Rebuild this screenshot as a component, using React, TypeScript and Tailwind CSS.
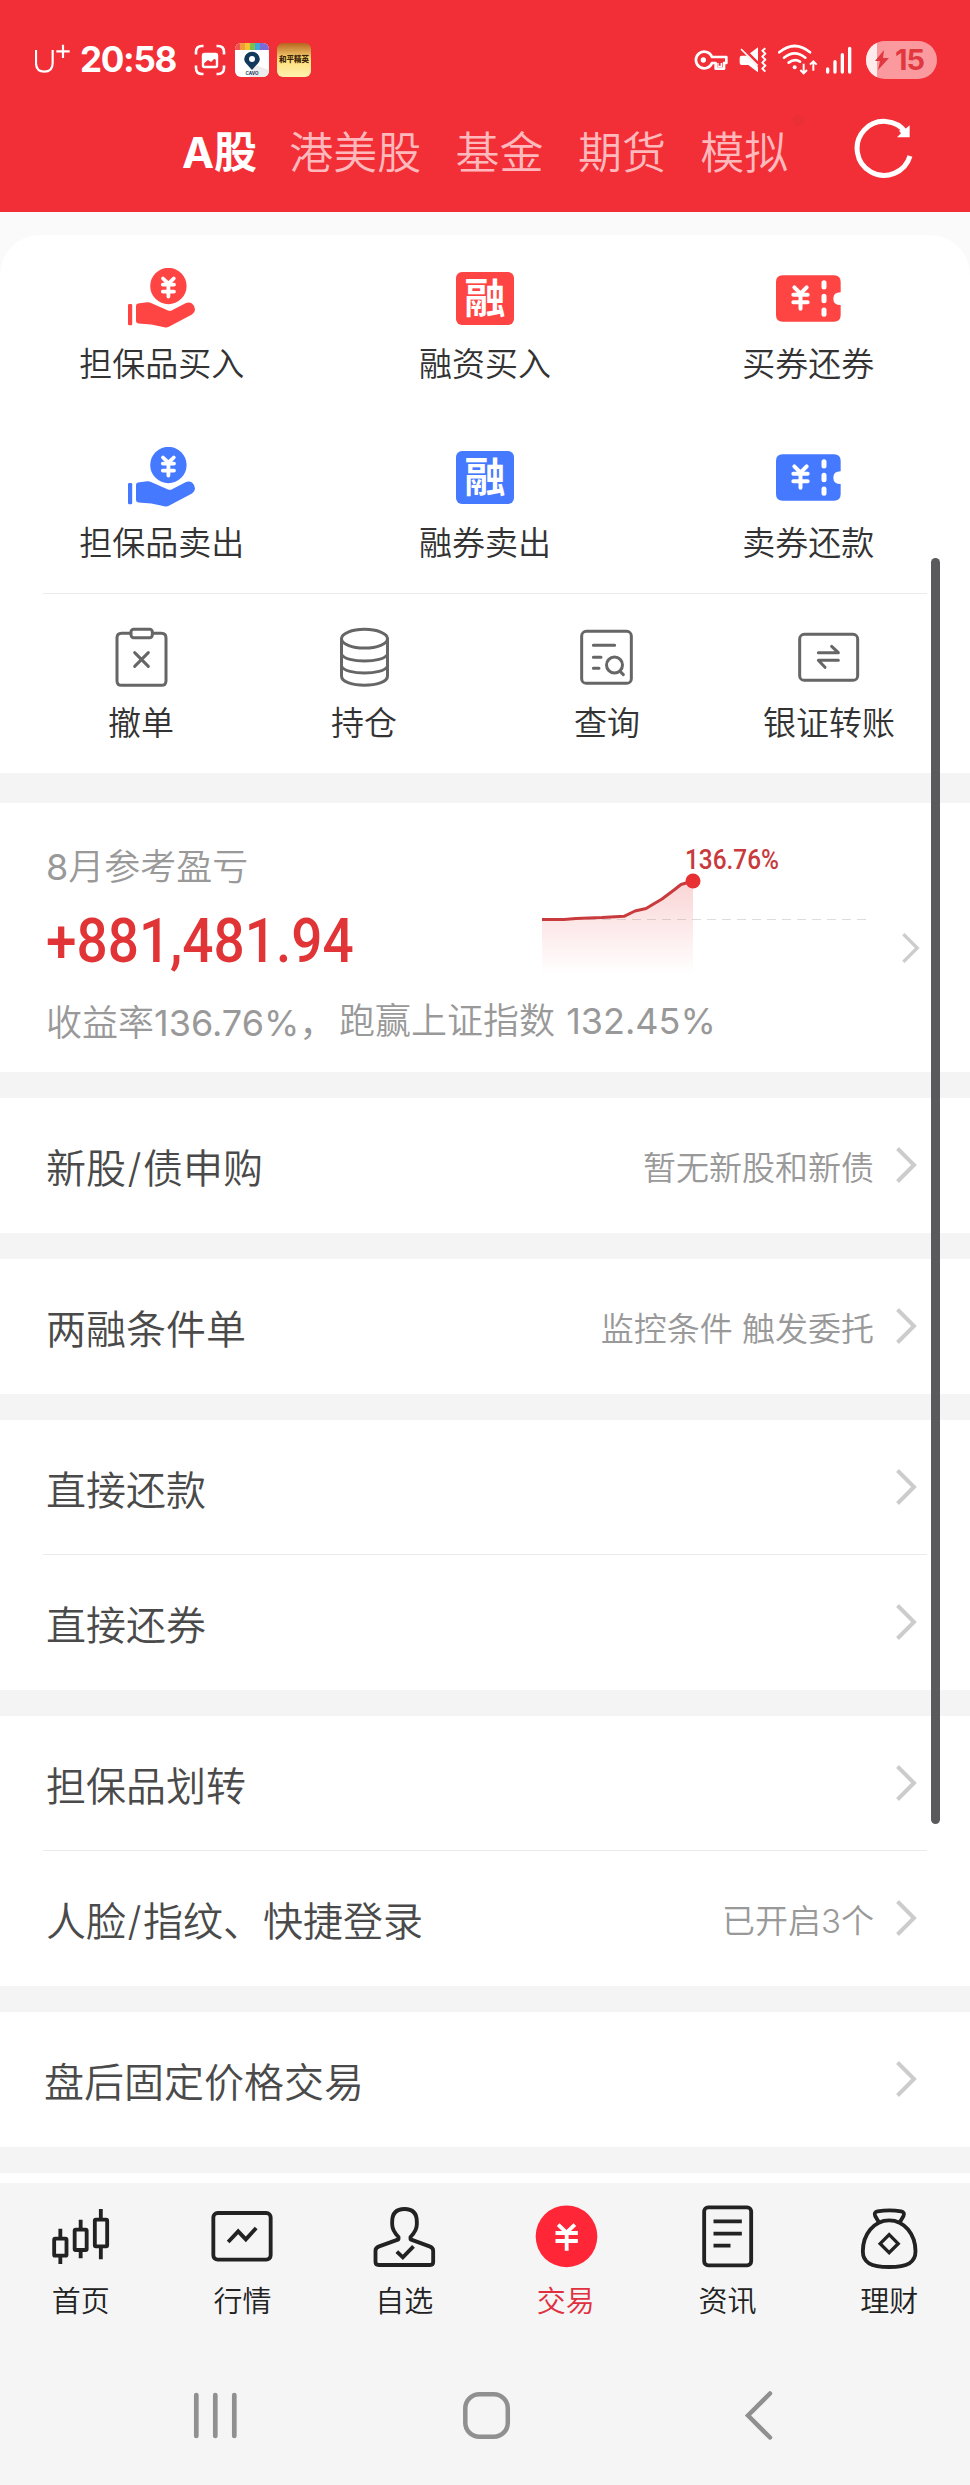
import type { ReactNode } from "react";

const RED = "#ff4444";
const BLUE = "#4579ff";

const marketTabs = ["港美股", "基金", "期货", "模拟"];

interface Row {
  label: string;
  note?: string;
}

const groups: Row[][] = [
  [{ label: "新股/债申购", note: "暂无新股和新债" }],
  [{ label: "两融条件单", note: "监控条件 触发委托" }],
  [{ label: "直接还款" }, { label: "直接还券" }],
  [{ label: "担保品划转" }, { label: "人脸/指纹、快捷登录", note: "已开启3个" }],
];

function HandCoin({ color }: { color: string }) {
  return (
    <svg width="72" height="60" viewBox="126 28 72 60">
      <circle cx="168.4" cy="46" r="18.2" fill={color} />
      <path
        d="M163 38.5l5.4 5.2 5.4-5.2M168.4 44v12.5M162.8 44.6h11.2M162.8 51.6h11.2"
        fill="none"
        stroke="#fff"
        strokeWidth="3.8"
        strokeLinecap="round"
        strokeLinejoin="round"
      />
      <rect x="128" y="64" width="4.2" height="21.3" rx="1.2" fill={color} />
      <path
        d="M136 66q0-2 2-2.400l9-1.300q2-.3 4 .7l17 7.400q2.300.9 4.500-.5l13-6.700q3.500-1.600 6.500.3 3 2.500 3 6 0 3-3 5l-22.700 12q-2.500 1.400-5 .8l-13-2.900-12.800-.9q-2.500-.2-2.500-2.500z"
        fill={color}
      />
    </svg>
  );
}

function RongBadge({ red }: { red?: boolean }) {
  return (
    <div className="flex h-[60px] items-center">
      <div
        className={`flex h-[53px] w-[58px] items-center justify-center rounded-[6px] text-[41px] font-bold leading-none text-white ${
          red ? "bg-[#ff4444]" : "bg-[#4579ff]"
        }`}
      >
        <span>融</span>
      </div>
    </div>
  );
}

function Ticket({ color }: { color: string }) {
  return (
    <svg width="72" height="60" viewBox="637 84 216 180">
      <path
        d="M669 106h154q20 0 20 20v31q-22 0-22 19t22 19v30q0 20-20 20H669q-20 0-20-20v-99q0-20 20-20z"
        fill={color}
      />
      <g fill="none" stroke="#fff" strokeLinecap="round" strokeLinejoin="round">
        <path d="M704 142l18.500 19 18.500-19M722.500 163v43M701 164h43M701 187h43" strokeWidth="12" />
        <path d="M793 128v13M793 169v13M793 210v13" strokeWidth="15" />
      </g>
    </svg>
  );
}

function LineIcon({ viewBox, children }: { viewBox: string; children: ReactNode }) {
  return (
    <svg
      width="64"
      height="64"
      viewBox={viewBox}
      fill="none"
      stroke="#666"
      strokeWidth="9"
      strokeLinecap="round"
      strokeLinejoin="round"
    >
      {children}
    </svg>
  );
}

function TabIcon({ viewBox, children }: { viewBox: string; children: ReactNode }) {
  return (
    <svg width="64" height="64" viewBox={viewBox} fill="none" stroke="#222" strokeWidth="11.500" overflow="visible">
      {children}
    </svg>
  );
}

function Chevron({ small }: { small?: boolean }) {
  return (
    <svg
      width={small ? 19 : 22}
      height={small ? 32 : 38}
      viewBox="0 0 22 38"
      fill="none"
      className="mt-[-1px] shrink-0"
    >
      <path d="M2.500 2.500L19 19 2.500 35.500" stroke="#ccc" strokeWidth="4" />
    </svg>
  );
}

function StatusBar() {
  return (
    <div className="flex h-[119px] items-center justify-between pl-[35px] pr-[33px] text-white">
      <div className="flex items-center">
        {/* carrier mark */}
        <svg width="36" height="34" viewBox="105 129 108 102" fill="none" stroke="#fff">
          <path d="M108 150v39q0 26 25 26t25-26v-39" strokeWidth="6.500" />
          <path d="M189 134v40M169 154h40" strokeWidth="6.500" />
        </svg>
        <span className="ml-[9px] w-[96px] whitespace-nowrap text-[35px] font-bold leading-none tracking-[-1.3px]">
          20:58
        </span>
        <svg className="ml-[18px]" width="32" height="32" viewBox="0 0 32 32" fill="none" stroke="#fff">
          <path
            d="M2 10.500V8q0-6 6-6h1.500M22.500 2H24q6 0 6 6v2.500M30 21.500V24q0 6-6 6h-1.500M9.500 30H8q-6 0-6-6v-2.500"
            strokeWidth="2.600"
          />
          <rect x="9" y="10" width="14" height="13" rx="1.500" strokeWidth="2.400" />
          <path d="M9 10h14v6l-3-1-3 3-3-2-5 4z" fill="#fff" stroke="none" />
        </svg>
        {/* running app icons */}
        <svg className="ml-[9px]" width="34" height="34" viewBox="0 0 34 34">
          <clipPath id="appClip">
            <rect width="34" height="34" rx="6" />
          </clipPath>
          <g clipPath="url(#appClip)">
            <rect width="34" height="34" fill="#fff" />
            <path d="M20 22l14 5v7H14z" fill="#ececec" />
            <rect width="5" height="7" fill="#ef5350" />
            <rect x="5" width="5" height="7" fill="#f39a3c" />
            <rect x="10" width="5" height="7" fill="#f4c430" />
            <rect x="15" width="5" height="7" fill="#7cc04b" />
            <rect x="20" width="5" height="7" fill="#3ea7dc" />
            <rect x="25" width="9" height="7" fill="#7a6bd8" />
            <path d="M17 27C12 21 9.200 19.500 9.200 16a7.800 7.200 0 0 1 15.600 0c0 3.500-2.800 5-7.800 11z" fill="#12395c" />
            <circle cx="17" cy="16" r="3" fill="#fff" />
            <text x="17" y="31.500" fontSize="4.500" fontWeight="700" textAnchor="middle" fill="#12395c">
              CAVO
            </text>
          </g>
        </svg>
        <div className="ml-[8px] flex h-[34px] w-[34px] items-center justify-center overflow-hidden rounded-[6px] bg-linear-to-b from-[#b5651d] via-[#ffdf7a] to-[#fff2b0]">
          <span className="whitespace-nowrap text-[7.500px] font-black leading-none text-[#3a2408]">和平精英</span>
        </div>
      </div>

      <div className="flex items-center">
        <svg width="35" height="22" viewBox="625 148 105 66" fill="none" stroke="#fff" strokeWidth="8">
          <path d="M682 172h43v18h-7v17h-25v-17h-11a25 25 0 1 1 0-18z" strokeLinejoin="round" />
          <circle cx="656" cy="181" r="8" fill="#fff" stroke="none" />
          <path d="M700 190v10h10v-10" strokeWidth="4" />
        </svg>
        <svg className="ml-[11px]" width="28" height="26" viewBox="762 140 84 78" fill="none" stroke="#fff">
          <path d="M764 172q0-6 6-6h16l33 34v16l-29-22h-20q-6 0-6-6zM795 159l24-18v42z" fill="#fff" stroke="none" />
          <path d="M768 146l50 50" strokeWidth="5" />
          <path d="M841 144l-9 7 9 9-9 9 9 9-9 9 9 9-9 9 9 9" strokeWidth="6" strokeLinejoin="round" />
        </svg>
        <svg className="ml-[10px]" width="42" height="32" viewBox="874 132 126 96" fill="none" stroke="#fff">
          <g strokeWidth="8" strokeLinecap="round">
            <path d="M881 157q46-38 92 0" />
            <path d="M895 173q32-26 64 0" />
            <path d="M909 188q18-14 34-3" />
          </g>
          <circle cx="927" cy="202" r="6" fill="#fff" stroke="none" />
          <path d="M954 191v28M944 210l10 10 10-10M983 212v-27M973 194l10-10 10 10" strokeWidth="6" />
        </svg>
        <svg
          className="ml-[6px]"
          width="28"
          height="28"
          viewBox="1018 136 84 84"
          stroke="#fff"
          strokeWidth="10"
          strokeLinecap="round"
        >
          <path d="M1026 205v9M1048 183v31M1070 162v52M1092 143v71" />
        </svg>
        <div className="ml-[13px] flex h-[38px] w-[71px] items-center overflow-hidden rounded-full bg-[#fa9a9e]">
          <div className="h-full w-[11px] bg-[#feeced]" />
          <svg className="ml-[-2px]" width="14" height="20" viewBox="0 0 14 20">
            <path d="M9 0L0 11h5L3 20 14 8H8z" fill="#e0383e" />
          </svg>
          <span className="ml-[6px] text-[29px] font-bold leading-none tracking-[-1px] text-[#e0383e]">15</span>
        </div>
      </div>
    </div>
  );
}

function Header() {
  return (
    <header className="h-[212px] bg-[#f22f37]">
      <StatusBar />
      <div className="flex h-[66px] items-center pl-[182px]">
        <span className="w-[73px] whitespace-nowrap text-[43px] font-bold leading-none text-white">A股</span>
        {marketTabs.map((tab) => (
          <span key={tab} className="ml-[34.300px] mt-[2px] whitespace-nowrap text-[44px] font-[350] leading-none text-[#ffb9bc]">
            {tab}
          </span>
        ))}
        <span className="ml-[5px] mb-[64px] h-[11px] w-[11px] rounded-full bg-[#ea2f36]" />
        <svg className="ml-[50px] mt-[-7px]" width="60" height="62" viewBox="1108 352 180 186" fill="none">
          <path d="M1265 397a81 81 0 1 0 11 69" stroke="#fff" strokeWidth="15" />
          <path d="M1275 374v36h-38l12-12-6-8 12-6 6 2z" fill="#fff" />
        </svg>
      </div>
    </header>
  );
}

function Action({ icon, label }: { icon: ReactNode; label: string }) {
  return (
    <div className="flex flex-col items-center">
      {icon}
      <span className="mt-[15px] h-[40px] text-[33px] font-[350] leading-[43px]">{label}</span>
    </div>
  );
}

function SmallAction({ icon, label }: { icon: ReactNode; label: string }) {
  return (
    <div className="flex flex-col items-center">
      {icon}
      <span className="mt-[12px] h-[40px] whitespace-nowrap text-[33px] font-[350] leading-[43px]">{label}</span>
    </div>
  );
}

function Actions() {
  return (
    <div className="bg-[#fafafa] pt-[23px]">
      <section className="h-[538px] rounded-t-[40px] bg-white pt-[33px] text-[#333]">
        <div className="grid grid-cols-3 gap-y-[64px]">
          <Action icon={<HandCoin color={RED} />} label="担保品买入" />
          <Action icon={<RongBadge red />} label="融资买入" />
          <Action icon={<Ticket color={RED} />} label="买券还券" />
          <Action icon={<HandCoin color={BLUE} />} label="担保品卖出" />
          <Action icon={<RongBadge />} label="融券卖出" />
          <Action icon={<Ticket color={BLUE} />} label="卖券还款" />
        </div>
        <div className="ml-[43px] mt-[31px] h-px w-[884px] bg-[#ebebeb]" />
        <div className="ml-[30px] mt-[32px] grid grid-cols-[222px_224px_262px_182px]">
          <SmallAction
            label="撤单"
            icon={
              <LineIcon viewBox="327 138 192 192">
                <path d="M392 160h-27q-14 0-14 14v128q0 14 14 14h119q14 0 14-14V174q0-14-14-14h-26" />
                <rect x="393" y="148" width="64" height="25" rx="8" />
                <path d="M404 218l41 41M445 218l-41 41" />
              </LineIcon>
            }
          />
          <SmallAction
            label="持仓"
            icon={
              <LineIcon viewBox="996 138 192 192">
                <ellipse cx="1093.500" cy="176" rx="69" ry="28" />
                <path d="M1024.500 176v112c0 37 138 37 138 0V176M1024.500 223c14 27 124 27 138 0M1024.500 259c14 27 124 27 138 0" />
              </LineIcon>
            }
          />
          <SmallAction
            label="查询"
            icon={
              <LineIcon viewBox="225 138 192 192">
                <rect x="245" y="154" width="149" height="156" rx="14" />
                <path d="M280 196h64M280 232h23M280 265h17M361 275l9 9" />
                <circle cx="343.500" cy="255" r="24" />
              </LineIcon>
            }
          />
          <SmallAction
            label="银证转账"
            icon={
              <LineIcon viewBox="891 138 192 192">
                <rect x="899" y="163" width="174" height="138" rx="14" />
                <path d="M955 218h60l-20-19M1015 241h-60l20 21" />
              </LineIcon>
            }
          />
        </div>
      </section>
    </div>
  );
}

function ProfitChart() {
  return (
    <svg width="330" height="140" viewBox="0 0 330 140" fill="none">
      <defs>
        <linearGradient id="profitFill" x1="0" y1="40" x2="0" y2="134" gradientUnits="userSpaceOnUse">
          <stop offset="0" stopColor="#e8393c" stopOpacity=".22" />
          <stop offset="1" stopColor="#e8393c" stopOpacity="0" />
        </linearGradient>
      </defs>
      <path d="M0 79.500h324" stroke="#ddd" strokeWidth="1" strokeDasharray="9 6" />
      <path
        d="M0 79.500H22L34 78.500 82 76.300 93 71 104 68.500 120 59 132 50 139 44.500 151 41V134H0z"
        fill="url(#profitFill)"
      />
      <path
        d="M0 79.500H22L34 78.500 60 77.600 82 76.300 93 71 104 68.500 120 59 132 50 139 44.500 151 41"
        stroke="#c93a3d"
        strokeWidth="3"
        strokeLinejoin="round"
      />
      <circle cx="151" cy="41" r="7.500" fill="#e83033" />
      <text
        x="143"
        y="29"
        fill="#c93a3d"
        fontFamily="Roboto, sans-serif"
        fontSize="27"
        fontWeight="500"
        textLength="94"
        lengthAdjust="spacingAndGlyphs"
      >
        136.76%
      </text>
    </svg>
  );
}

function ProfitCard() {
  return (
    <section className="flex h-[269px] items-center bg-white pl-[46px] pr-[50px]">
      <div className="h-full flex-1">
        <div className="flex h-[187px]">
          <div className="w-[496px] pt-[44px]">
            <div className="h-[40px] text-[36px] leading-[40px] text-[#999]">
              8<span className="font-[350]">月参考盈亏</span>
            </div>
            <div className="mt-[20px] h-[68px] w-[300px] origin-left scale-x-90 whitespace-nowrap font-[Roboto] text-[61px] font-medium leading-[68px] text-[#e03436]">
              +881,481.94
            </div>
          </div>
          <div className="pt-[37px]">
            <ProfitChart />
          </div>
        </div>
        <div className="mt-[11px] flex h-[40px] whitespace-nowrap text-[36px] leading-[40px] text-[#999]">
          <span className="mt-[2px] w-[293px]">
            <span className="font-[350]">收益率</span>136.76%，
          </span>
          <span>
            <span className="font-[350]">跑赢上证指数</span> <span className="ml-[1px]">132.45%</span>
          </span>
        </div>
      </div>
      <div className="mt-[21px]">
        <Chevron small />
      </div>
    </section>
  );
}

function ListRow({ label, note, inset }: Row & { inset?: boolean }) {
  return (
    <div
      className={`flex h-[135px] items-center justify-between bg-white pr-[53px] ${inset ? "pl-[44px]" : "pl-[46px]"}`}
    >
      <span className="mt-[6px] text-[40px] font-[350] leading-[48px] text-[#4a4a4a]">
        {label.split("/").map((part, i) => (
          <span key={part}>
            {i > 0 && <span className="mx-[1.500px]">/</span>}
            {part}
          </span>
        ))}
      </span>
      <div className="flex items-center gap-[21px]">
        {note && <span className="mt-[4px] text-[33px] font-[350] leading-[40px] text-[#999]">{note}</span>}
        <Chevron />
      </div>
    </div>
  );
}

const bottomTabs: { label: string; active?: boolean; icon: ReactNode }[] = [
  {
    label: "首页",
    icon: (
      <TabIcon viewBox="146.500 252 192 192">
        <rect x="162" y="356" width="37" height="51" rx="3" />
        <rect x="223.500" y="329" width="36" height="61" rx="3" />
        <rect x="284" y="299" width="37" height="80" rx="3" />
        <path d="M180.500 326v30M180.500 407v25M241.500 299v30M241.500 390v25M302 267v32M302 380v38" />
      </TabIcon>
    ),
  },
  {
    label: "行情",
    icon: (
      <TabIcon viewBox="631.500 252 192 192">
        <rect x="641.500" y="279" width="172" height="140" rx="13" />
        <path d="M686 366l30-32 23 24 31-34" />
      </TabIcon>
    ),
  },
  {
    label: "自选",
    icon: (
      <TabIcon viewBox="1116.500 252 192 192">
        <path
          d="M1196 351q-19-19-19-38v-8q0-38 37-38t37 38v8q0 19-19 38v7l57 21q11 4 11 13v34q0 9-9 9h-154q-10 0-10-9v-34q0-9 11-13l58-21z"
          strokeLinejoin="round"
        />
        <path d="M1191 395l18 17 32-33" />
      </TabIcon>
    ),
  },
  {
    label: "交易",
    active: true,
    icon: (
      <TabIcon viewBox="191.500 252 192 192">
        <circle cx="289" cy="349" r="92.500" fill="#ff2637" stroke="none" />
        <path d="M264 314l25 24 25-24M289.500 336v56M256 339h67M256 363h67" stroke="#fff" />
      </TabIcon>
    ),
  },
  {
    label: "资讯",
    icon: (
      <TabIcon viewBox="677.500 252 192 192">
        <rect x="705" y="262" width="141" height="174" rx="12" />
        <path d="M733 304h85M733 341h85M733 377h51" />
      </TabIcon>
    ),
  },
  {
    label: "理财",
    icon: (
      <TabIcon viewBox="1161.500 252 192 192">
        <path
          d="M1228 308l-12-20q-5-11 7-14 36-6 71 0 12 3 7 14l-12 20M1258 301c-46 0-79 43-79 93 0 33 23 47 79 47s79-14 79-47c0-50-33-93-79-93z"
          strokeLinejoin="round"
        />
        <path d="M1258 344l27 27-27 27-27-27z" strokeWidth="10" />
      </TabIcon>
    ),
  },
];

function BottomBar() {
  return (
    <footer className="h-[302px] bg-[#f5f5f5] pt-[21px]">
      <nav className="grid grid-cols-6">
        {bottomTabs.map((tab) => (
          <div key={tab.label} className="flex flex-col items-center">
            {tab.icon}
            <span
              className={`mt-[15px] h-[36px] text-[29px] font-[350] leading-[37px] ${
                tab.active ? "text-[#e0303f]" : "text-[#222]"
              }`}
            >
              {tab.label}
            </span>
          </div>
        ))}
      </nav>
      {/* system navigation */}
      <div className="mt-[71px] flex h-[52px] items-center pl-[190px]">
        <svg width="50" height="52" viewBox="0 0 50 52" stroke="#909090" strokeWidth="4.700" strokeLinecap="round">
          <path d="M6.300 5v41M25.300 5v41M44.300 5v41" />
        </svg>
        <svg
          className="ml-[222px]"
          width="50"
          height="52"
          viewBox="0 0 50 52"
          fill="none"
          stroke="#909090"
          strokeWidth="4.500"
        >
          <rect x="3.300" y="4.300" width="42.500" height="42.500" rx="14" />
        </svg>
        <svg
          className="ml-[230px]"
          width="32"
          height="52"
          viewBox="0 0 32 52"
          fill="none"
          stroke="#909090"
          strokeWidth="4.500"
          strokeLinecap="round"
        >
          <path d="M28 3.500L6 25.500 28 47.500" />
        </svg>
      </div>
    </footer>
  );
}

export default function App() {
  return (
    <div className="relative h-[2485px] w-[970px] overflow-hidden bg-white font-[Inter,'Noto_Sans_CJK_SC',sans-serif]">
      <Header />
      <Actions />
      <div className="h-[30px] bg-[#f4f4f4]" />
      <ProfitCard />
      {groups.map((rows) => (
        <section key={rows[0].label} className="border-t-[26px] border-[#f4f4f4]">
          {rows.map((row, i) => (
            <div key={row.label}>
              {i > 0 && <div className="relative ml-[43px] mt-[-1px] h-px w-[884px] bg-[#ebebeb]" />}
              <ListRow {...row} />
            </div>
          ))}
        </section>
      ))}
      <section className="border-y-[26px] border-[#f4f4f4]">
        <ListRow label="盘后固定价格交易" inset />
      </section>
      <div className="h-[10px]" />
      <BottomBar />

      {/* scrollbar thumb */}
      <div className="absolute left-[931px] top-[558px] h-[1266px] w-[9px] rounded-full bg-[#5a5a5c]" />
    </div>
  );
}
